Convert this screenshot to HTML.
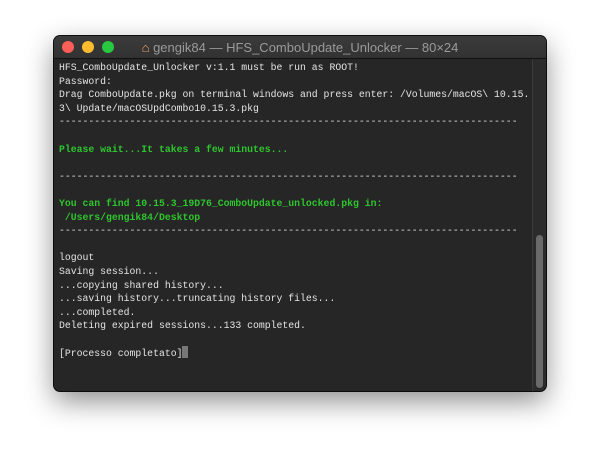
<!DOCTYPE html>
<html><head><style>
body{margin:0;width:600px;height:464px;background:#fff;overflow:hidden;position:relative;font-family:"Liberation Sans",sans-serif}
.win{position:absolute;left:54px;top:36px;width:492px;height:355px;background:#262626;border-radius:6px;box-shadow:0 10px 28px rgba(0,0,0,.45),0 0 0 1px #111;overflow:hidden}
.tb{height:22px;background:linear-gradient(#3b3b3b,#323232);border-bottom:1px solid #111;position:relative}
.d{position:absolute;top:5px;width:12px;height:12px;border-radius:50%}
.title{position:absolute;left:0;right:0;top:4px;text-align:center;color:#9a9a9a;font-size:13px}
pre{position:absolute;left:5px;top:25px;margin:0;font-family:"Liberation Mono",monospace;font-size:9.8px;line-height:13.6px;color:#e4e4e4}
.g{color:#2ec52e;font-weight:bold}
.sb{position:absolute;right:0;top:23px;width:13px;bottom:0;background:#2b2b2b;border-left:1px solid #3a3a3a}
.th{position:absolute;left:3px;width:7px;top:176px;bottom:3px;background:#6a6a6a;border-radius:4px}
.cur{display:inline-block;width:6px;height:12px;background:#777;vertical-align:-2px}
</style></head><body>
<div class="win">
<div class="tb">
<div class="d" style="left:8px;background:#fc5f57"></div>
<div class="d" style="left:28px;background:#fdbc2e"></div>
<div class="d" style="left:48px;background:#28c840"></div>
<div class="title"><span style="color:#e8a060">&#8962;</span> gengik84 — HFS_ComboUpdate_Unlocker — 80×24</div>
</div>
<pre>HFS_ComboUpdate_Unlocker v:1.1 must be run as ROOT!
Password:
Drag ComboUpdate.pkg on terminal windows and press enter: /Volumes/macOS\ 10.15.
3\ Update/macOSUpdCombo10.15.3.pkg
------------------------------------------------------------------------------

<span class="g">Please wait...It takes a few minutes...</span>

------------------------------------------------------------------------------

<span class="g">You can find 10.15.3_19D76_ComboUpdate_unlocked.pkg in:
 /Users/gengik84/Desktop</span>
------------------------------------------------------------------------------

logout
Saving session...
...copying shared history...
...saving history...truncating history files...
...completed.
Deleting expired sessions...133 completed.

[Processo completato]<span class="cur"></span></pre>
<div class="sb"><div class="th"></div></div>
</div>
</body></html>
